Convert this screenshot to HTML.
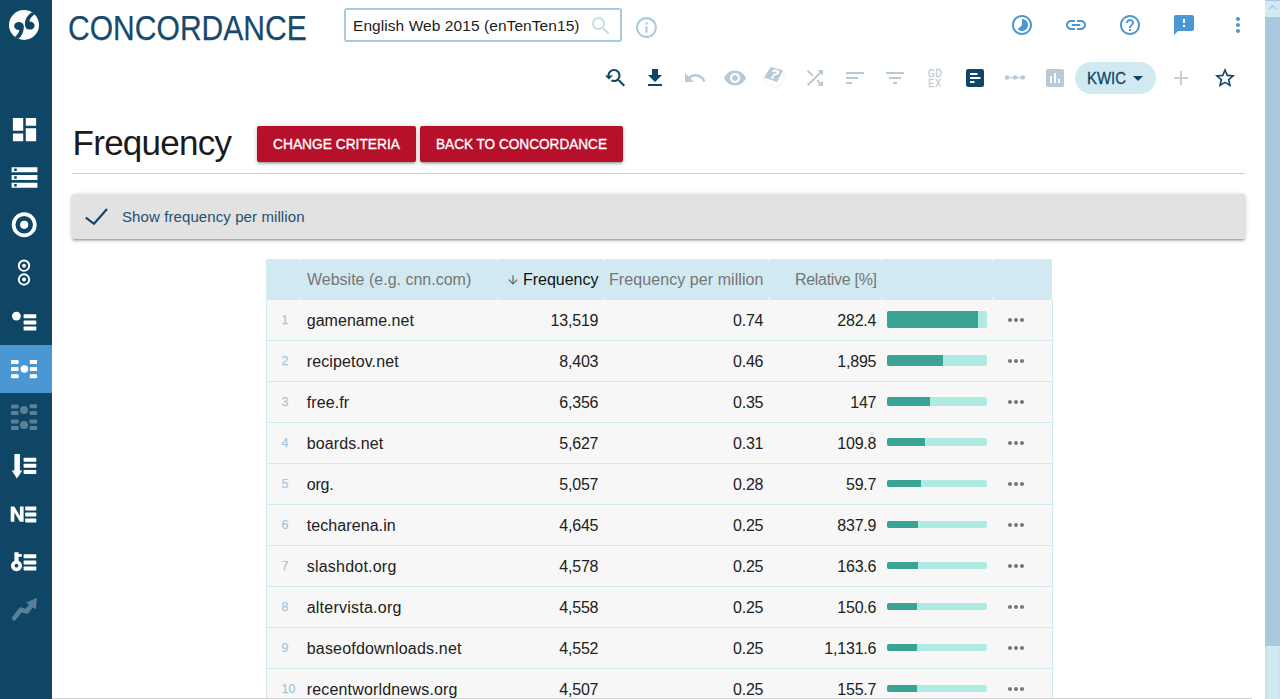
<!DOCTYPE html>
<html lang="en">
<head>
<meta charset="utf-8">
<title>Concordance - Frequency</title>
<style>
html,body{margin:0;padding:0;width:1280px;height:699px;overflow:hidden;background:#fff}
body{position:relative;font-family:"Liberation Sans",sans-serif}
.t{position:absolute;white-space:nowrap;transform-origin:0 50%}
.i{position:absolute;display:block}
.side{position:absolute;left:0;top:0;width:52px;height:699px;background:#0f4666}
.active{position:absolute;left:0;top:345px;width:52px;height:48px;background:#4a97d3}
.inp{position:absolute;left:344px;top:8px;width:274px;height:30px;border:2px solid #a6cbdf;border-radius:3px;background:#fff}
.gdex{position:absolute;left:921px;top:69px;width:28px;text-align:center;font-size:10px;line-height:10.4px;color:#b9cbd7;letter-spacing:.9px;text-indent:.9px;-webkit-text-stroke:.3px #b9cbd7;transform:scaleX(.88)}
.kwic{position:absolute;left:1075px;top:62px;width:81px;height:32px;border-radius:16px;background:#d1eaf2}
.btn{position:absolute;top:126px;height:36px;background:#b7102a;border-radius:2px;box-shadow:0 2px 2px 0 rgba(0,0,0,.14),0 3px 1px -2px rgba(0,0,0,.12),0 1px 5px 0 rgba(0,0,0,.2)}
.hr{position:absolute;left:72px;top:173px;width:1173px;height:1px;background:#cfcfcf}
.panel{position:absolute;left:72px;top:194px;width:1173px;height:45px;background:#e2e2e2;border-radius:2px;box-shadow:0 2px 2px 0 rgba(0,0,0,.14),0 3px 1px -2px rgba(0,0,0,.12),0 1px 5px 0 rgba(0,0,0,.2)}
.thead{position:absolute;left:266px;top:259px;width:786px;height:40px;background:#fff}
.th{position:absolute;top:259px;height:40px;background:#d1eaf2;border-radius:2px}
.tbody{position:absolute;left:266px;top:299px;width:785px;height:400px;background:#f7f7f7;border:1px solid #d1eaf2;border-bottom:0}
.rl{position:absolute;left:267px;width:785px;height:1px;background:#d1eaf2}
.n{font-size:12.5px;line-height:18px;color:#a3c7dc;-webkit-text-stroke:.25px #a3c7dc;margin-left:-.5px}
.c{font-size:16px;line-height:20px;color:#212121}
.r{text-align:right;letter-spacing:-.2px}
.bar{position:absolute;left:887px;width:100px;background:#b0ebe3;border-radius:2px;overflow:hidden}
.bar div{height:100%;background:#3aa394}
.sb{position:absolute;left:1265px;top:0;width:15px;height:699px;background:linear-gradient(to right,#c6e1ed,#d2eaf2 4px,#d2eaf2 11px,#cae4ee)}
.sbt{position:absolute;left:1265px;top:17px;width:15px;height:629px;background:#a6c9de}
.sbu{position:absolute;left:1265px;top:0;width:15px;height:16px;background:#d1eaf2;border-top:1px solid #a6c9de}
.bot{position:absolute;left:52px;top:698px;width:1200px;height:1px;background:#cfcfcf}

</style>
</head>
<body>
<div class="side"></div>
<div class="active"></div>
<svg class="i" style="left:8px;top:9px;" width="32" height="32" viewBox="0 0 32 32"><circle cx="16" cy="16" r="15" fill="#fff"/><g fill="#0f4666"><g><ellipse cx="10.900" cy="17" rx="4.800" ry="4"/><path d="M15.600 16.600C16.300 22.600 13.900 27.100 10.300 30L6.900 28.100C9.500 25.900 11.100 23.400 11.500 20.300z"/></g><ellipse cx="21.800" cy="16.600" rx="4.800" ry="4"/><path d="M17 16.800C16.300 11 19.300 6.300 24 3.300L26.700 5.200C23.600 7.300 21.700 10 21.300 13z"/></g></svg>
<svg class="i" style="left:8.5px;top:113.5px;" width="31" height="31" viewBox="0 0 24 24"><path fill="#fff" d="M3 13h8V3H3v10zm0 8h8v-6H3v6zm10 0h8V11h-8v10zm0-18v6h8V3h-8z"/></svg>
<svg class="i" style="left:8.5px;top:161.5px;" width="31" height="31" viewBox="0 0 24 24"><path fill="#fff" d="M2 20h20v-4H2v4zm2-3h2v2H4v-2zM2 4v4h20V4H2zm4 3H4V5h2v2zm-4 7h20v-4H2v4zm2-3h2v2H4v-2z"/></svg>
<svg class="i" style="left:0;top:0" width="52" height="699" viewBox="0 0 52 699"><circle cx="24.200" cy="224.800" r="10.600" fill="none" stroke="#fff" stroke-width="3.700"/><circle cx="24.200" cy="224.800" r="4.100" fill="#fff"/><g fill="none" stroke="#fff" stroke-width="1.900"><circle cx="24" cy="265.700" r="5.200"/><circle cx="24" cy="279.500" r="5.200"/></g><circle cx="24" cy="265.700" r="2" fill="#fff"/><circle cx="24" cy="279.500" r="2" fill="#fff"/><g fill="#fff"><circle cx="16.400" cy="316.100" r="4.400"/><rect x="23.6" y="314.2" width="12.7" height="4.0" rx=".7"/><rect x="23.6" y="320.4" width="12.7" height="4.0" rx=".7"/><rect x="23.6" y="326.6" width="12.7" height="4.0" rx=".7"/></g><g fill="#fff"><rect x="11" y="360" width="7.6" height="4.0" rx=".7"/><rect x="11" y="367.1" width="7.6" height="4.0" rx=".7"/><rect x="11" y="374.2" width="7.6" height="4.0" rx=".7"/><rect x="29.8" y="360" width="7.3" height="4.0" rx=".7"/><rect x="29.8" y="367.1" width="7.3" height="4.0" rx=".7"/><rect x="29.8" y="374.2" width="7.3" height="4.0" rx=".7"/><circle cx="24.400" cy="369" r="3.800"/></g><g fill="#5a8098"><rect x="11" y="404.6" width="7.6" height="4.0" rx=".7"/><rect x="11" y="411" width="7.6" height="4.0" rx=".7"/><rect x="11" y="419.6" width="7.6" height="4.0" rx=".7"/><rect x="11" y="426" width="7.6" height="4.0" rx=".7"/><rect x="29.6" y="404.3" width="7.5" height="4.0" rx=".7"/><rect x="29.6" y="411" width="7.5" height="4.0" rx=".7"/><rect x="29.6" y="419.6" width="7.5" height="4.0" rx=".7"/><rect x="29.6" y="426" width="7.5" height="4.0" rx=".7"/><circle cx="24" cy="409.900" r="4"/><circle cx="24" cy="425" r="4"/></g><g fill="#fff"><path d="M14.400 454.100h5.500v16.300h2.400l-5.400 8.200-5.200-8.200h2.700z"/><rect x="23.6" y="457.7" width="12.7" height="4.0" rx=".7"/><rect x="23.6" y="463.8" width="12.7" height="4.0" rx=".7"/><rect x="23.6" y="469.9" width="12.7" height="4.0" rx=".7"/></g><g fill="#fff"><path d="M10.700 506.600h3.700l5.500 9.300v-9.300h3.700v15.100h-3.700l-5.500-9.300v9.300h-3.700z"/><rect x="25.2" y="506.5" width="11.1" height="4.0" rx=".7"/><rect x="25.2" y="512.5" width="11.1" height="4.0" rx=".7"/><rect x="25.2" y="518.5" width="11.1" height="4.0" rx=".7"/></g><g fill="#fff"><path fill-rule="evenodd" d="M14.400 552.300h4.200v1.700h3.100v2.700h-3.100v4a5.500 5.500 0 1 1-4.200 0zM16.500 563.800a1.900 1.900 0 1 0 0 3.800 1.900 1.900 0 0 0 0-3.800z"/><rect x="23.6" y="554.3" width="12.7" height="4.0" rx=".7"/><rect x="23.6" y="560.4" width="12.7" height="4.0" rx=".7"/><rect x="23.6" y="566.5" width="12.7" height="4.0" rx=".7"/></g><path fill="none" stroke="#5a8098" stroke-width="4.600" stroke-linecap="round" stroke-linejoin="round" d="M14.200 618.100l6.700-8.500 5.700 1.900 4.600-6"/><path fill="#5a8098" d="M36.900 598l-10.900 4.500 10 6.900z"/></svg>
<span class="t" style="left:68.4px;top:6px;font-size:35px;line-height:44px;color:#174a6b;transform:scaleX(0.8588);-webkit-text-stroke:.25px #174a6b;">CONCORDANCE</span>
<div class="inp"></div>
<span class="t" style="left:353px;top:16px;font-size:15.5px;line-height:19px;color:#1c1c1c;letter-spacing:0.067px;">English Web 2015 (enTenTen15)</span>
<svg class="i" style="left:588.7px;top:13.7px;" width="24" height="24" viewBox="0 0 24 24"><path fill="#c9dde9" d="M15.5 14h-.79l-.28-.27C15.41 12.59 16 11.11 16 9.5 16 5.91 13.09 3 9.5 3S3 5.91 3 9.5 5.91 16 9.5 16c1.61 0 3.09-.59 4.23-1.57l.27.28v.79l5 4.99L20.49 19l-4.99-5zm-6 0C7.01 14 5 11.99 5 9.5S7.01 5 9.5 5 14 7.01 14 9.5 11.99 14 9.5 14z"/></svg>
<svg class="i" style="left:633.5px;top:14.5px;" width="25" height="25" viewBox="0 0 24 24"><path fill="#a9cbdf" d="M11 17h2v-6h-2v6zm1-15C6.48 2 2 6.48 2 12s4.48 10 10 10 10-4.48 10-10S17.52 2 12 2zm0 18c-4.41 0-8-3.59-8-8s3.59-8 8-8 8 3.59 8 8-3.59 8-8 8zM11 9h2V7h-2v2z"/></svg>
<svg class="i" style="left:1010px;top:13px;" width="24" height="24" viewBox="0 0 24 24"><path fill="#4a97d3" d="M16.24 7.76C15.07 6.59 13.54 6 12 6v6l-4.24 4.24c2.34 2.34 6.14 2.34 8.49 0 2.34-2.34 2.34-6.14-.01-8.48zM12 2C6.48 2 2 6.48 2 12s4.48 10 10 10 10-4.48 10-10S17.52 2 12 2zm0 18c-4.42 0-8-3.58-8-8s3.58-8 8-8 8 3.58 8 8-3.58 8-8 8z"/></svg>
<svg class="i" style="left:1064px;top:13px;" width="24" height="24" viewBox="0 0 24 24"><path fill="#4a97d3" d="M3.9 12c0-1.71 1.39-3.1 3.1-3.1h4V7H7c-2.76 0-5 2.24-5 5s2.24 5 5 5h4v-1.9H7c-1.71 0-3.1-1.39-3.1-3.1zM8 13h8v-2H8v2zm9-6h-4v1.9h4c1.71 0 3.1 1.39 3.1 3.1s-1.39 3.1-3.1 3.1h-4V17h4c2.76 0 5-2.24 5-5s-2.24-5-5-5z"/></svg>
<svg class="i" style="left:1118px;top:13px;" width="24" height="24" viewBox="0 0 24 24"><path fill="#4a97d3" d="M11 18h2v-2h-2v2zm1-16C6.48 2 2 6.48 2 12s4.48 10 10 10 10-4.48 10-10S17.52 2 12 2zm0 18c-4.41 0-8-3.59-8-8s3.59-8 8-8 8 3.59 8 8-3.59 8-8 8zm0-14c-2.21 0-4 1.79-4 4h2c0-1.1.9-2 2-2s2 .9 2 2c0 2-3 1.75-3 5h2c0-2.25 3-2.5 3-5 0-2.21-1.79-4-4-4z"/></svg>
<svg class="i" style="left:1172px;top:13px;" width="24" height="24" viewBox="0 0 24 24"><path fill="#4a97d3" d="M20 2H4c-1.1 0-1.99.9-1.99 2L2 22l4-4h14c1.1 0 2-.9 2-2V4c0-1.1-.9-2-2-2zm-7 12h-2v-2h2v2zm0-4h-2V6h2v4z"/></svg>
<svg class="i" style="left:1226px;top:13px;" width="24" height="24" viewBox="0 0 24 24"><path fill="#4a97d3" d="M12 8c1.1 0 2-.9 2-2s-.9-2-2-2-2 .9-2 2 .9 2 2 2zm0 2c-1.1 0-2 .9-2 2s.9 2 2 2 2-.9 2-2-.9-2-2-2zm0 6c-1.1 0-2 .9-2 2s.9 2 2 2 2-.9 2-2-.9-2-2-2z"/></svg>
<svg class="i" style="left:603px;top:66px;" width="24" height="24" viewBox="0 0 24 24"><path fill="#0f4567" d="M17.01 14h-.8l-.27-.27c.98-1.14 1.57-2.61 1.57-4.23 0-3.59-2.91-6.5-6.5-6.5s-6.5 3-6.5 6.5H2l3.84 4 4.16-4H6.51C6.51 7 8.53 5 11.01 5s4.5 2.01 4.5 4.5c0 2.48-2.02 4.5-4.5 4.5-.65 0-1.26-.14-1.82-.38L7.71 15.1c.97.57 2.09.9 3.3.9 1.61 0 3.08-.59 4.22-1.57l.27.27v.79l5.01 4.99L22 19l-4.99-5z"/></svg>
<svg class="i" style="left:643px;top:66px;" width="24" height="24" viewBox="0 0 24 24"><path fill="#0f4567" d="M19 9h-4V3H9v6H5l7 7 7-7zM5 18v2h14v-2H5z"/></svg>
<svg class="i" style="left:683px;top:66px;" width="24" height="24" viewBox="0 0 24 24"><path fill="#b8cad6" d="M12.5 8c-2.65 0-5.05.99-6.9 2.6L2 7v9h9l-3.62-3.62c1.39-1.16 3.16-1.88 5.12-1.88 3.54 0 6.55 2.31 7.6 5.5l2.37-.78C21.08 11.03 17.15 8 12.5 8z"/></svg>
<svg class="i" style="left:723px;top:66px;" width="24" height="24" viewBox="0 0 24 24"><path fill="#b8cad6" d="M12 4.5C7 4.5 2.73 7.61 1 12c1.73 4.39 6 7.5 11 7.5s9.27-3.11 11-7.5c-1.73-4.39-6-7.5-11-7.5zM12 17c-2.76 0-5-2.24-5-5s2.24-5 5-5 5 2.24 5 5-2.24 5-5 5zm0-8c-1.66 0-3 1.34-3 3s1.34 3 3 3 3-1.34 3-3-1.34-3-3-3z"/></svg>
<svg class="i" style="left:760px;top:62px" width="28" height="30" viewBox="0 0 28 30"><path fill="#b8cad6" d="M10.800 5l12.300 3.200-6 11.900L3.900 15.400z"/><path fill="none" stroke="#e9eff3" stroke-width=".9" d="M3.900 15.400l1.200 5 13.200 6.300-1.200-6.600M18.300 26.700l6-11.300-1.200-7.200"/><text x="0" y="4.700" font-family="Liberation Sans, sans-serif" font-weight="700" font-size="13.500" fill="#fff" stroke="#fff" stroke-width=".4" text-anchor="middle" transform="translate(14.300 12.200) rotate(17) skewX(-10)">?</text></svg>
<svg class="i" style="left:803px;top:66px;" width="24" height="24" viewBox="0 0 24 24"><path fill="#b8cad6" d="M10.59 9.17L5.41 4 4 5.41l5.17 5.17 1.42-1.41zM14.5 4l2.04 2.04L4 18.59 5.41 20 17.96 7.46 20 9.5V4h-5.5zm.33 9.41l-1.41 1.41 3.13 3.13L14.5 20H20v-5.5l-2.04 2.04-3.13-3.13z"/></svg>
<svg class="i" style="left:843px;top:66px;" width="24" height="24" viewBox="0 0 24 24"><path fill="#b8cad6" d="M3 18h6v-2H3v2zM3 6v2h18V6H3zm0 7h12v-2H3v2z"/></svg>
<svg class="i" style="left:883px;top:66px;" width="24" height="24" viewBox="0 0 24 24"><path fill="#b8cad6" d="M10 18h4v-2h-4v2zM3 6v2h18V6H3zm3 7h12v-2H6v2z"/></svg>
<div class="gdex">GD<br>EX</div>
<svg class="i" style="left:963px;top:66px;" width="24" height="24" viewBox="0 0 24 24"><rect x="3" y="3" width="18" height="18" rx="2.2" fill="#0f4567"/><g fill="#fff"><rect x="7" y="7" width="7.500" height="2"/><rect x="7" y="11" width="10.500" height="2"/><rect x="7" y="15" width="4.500" height="2"/></g></svg>
<svg class="i" style="left:1003px;top:66px;" width="24" height="24" viewBox="0 0 24 24"><g fill="#b8cad6"><rect x="4" y="11" width="16" height="1"/><circle cx="4" cy="11.500" r="2.300"/><circle cx="12" cy="11.500" r="2.300"/><circle cx="19.800" cy="11.500" r="2.300"/></g></svg>
<svg class="i" style="left:1043px;top:66px;" width="24" height="24" viewBox="0 0 24 24"><path fill="#b8cad6" d="M19 3H5c-1.1 0-2 .9-2 2v14c0 1.1.9 2 2 2h14c1.1 0 2-.9 2-2V5c0-1.1-.9-2-2-2zM9 17H7v-7h2v7zm4 0h-2V7h2v10zm4 0h-2v-4h2v4z"/></svg>
<div class="kwic"></div>
<span class="t" style="left:1087px;top:69px;font-size:16px;line-height:20px;color:#0f4567;transform:scaleX(0.9334);-webkit-text-stroke:.3px #0f4567;">KWIC</span>
<svg class="i" style="left:1126px;top:65.5px;" width="24" height="24" viewBox="0 0 24 24"><path fill="#0f4567" d="M7 10l5 5 5-5z"/></svg>
<svg class="i" style="left:1169px;top:66px;" width="24" height="24" viewBox="0 0 24 24"><path fill="#c3d1db" d="M19 13h-6v6h-2v-6H5v-2h6V5h2v6h6v2z"/></svg>
<svg class="i" style="left:1213px;top:66px;" width="24" height="24" viewBox="0 0 24 24"><path fill="#0f4567" d="M22 9.24l-7.19-.62L12 2 9.19 8.63 2 9.24l5.46 4.73L5.82 21 12 17.27 18.18 21l-1.63-7.03L22 9.24zM12 15.4l-3.76 2.27 1-4.28-3.32-2.88 4.38-.38L12 6.1l1.71 4.04 4.38.38-3.32 2.88 1 4.28L12 15.4z"/></svg>
<span class="t" style="left:72.6px;top:121px;font-size:35px;line-height:44px;color:#1b1b1b;letter-spacing:-0.747px;">Frequency</span>
<div class="btn" style="left:257px;width:159px"></div>
<div class="btn" style="left:420px;width:203px"></div>
<span class="t" style="left:272.5px;top:135px;font-size:14.5px;line-height:18px;color:#fff;transform:scaleX(0.9495);-webkit-text-stroke:.35px #fff;">CHANGE CRITERIA</span>
<span class="t" style="left:436px;top:135px;font-size:14.5px;line-height:18px;color:#fff;transform:scaleX(0.9377);-webkit-text-stroke:.35px #fff;">BACK TO CONCORDANCE</span>
<div class="hr"></div>
<div class="panel"></div>
<svg class="i" style="left:84.3px;top:205px;" width="24" height="24" viewBox="0 0 24 24"><path fill="none" stroke="#0f4567" stroke-width="2.100" d="M1.800 12.600l8.200 6.200L23 4"/></svg>
<span class="t" style="left:122px;top:207px;font-size:15px;line-height:19px;color:#1f506e;letter-spacing:0.096px;">Show frequency per million</span>
<div class="thead"></div>
<div class="th" style="left:266px;width:35px"></div>
<div class="th" style="left:301px;width:197px"></div>
<div class="th" style="left:498px;width:106px"></div>
<div class="th" style="left:604px;width:165px"></div>
<div class="th" style="left:769px;width:113px"></div>
<div class="th" style="left:882px;width:111px"></div>
<div class="th" style="left:993px;width:59px"></div>
<span class="t" style="left:307px;top:270px;font-size:16px;line-height:20px;color:#757575;">Website (e.g. cnn.com)</span>
<svg class="i" style="left:505.5px;top:272.5px;" width="14" height="14" viewBox="0 0 24 24"><path fill="#616161" d="M20 12l-1.41-1.41L13 16.17V4h-2v12.17l-5.58-5.59L4 12l8 8 8-8z"/></svg>
<span class="t" style="left:523px;top:270px;font-size:16px;line-height:20px;color:#111;letter-spacing:-0.012px;">Frequency</span>
<span class="t" style="left:609px;top:270px;font-size:16px;line-height:20px;color:#757575;letter-spacing:0.077px;">Frequency per million</span>
<span class="t" style="left:795px;top:270px;font-size:16px;line-height:20px;color:#757575;letter-spacing:-0.307px;">Relative [%]</span>
<div class="tbody"></div>
<span class="t n" style="left:282px;top:311px">1</span>
<span class="t" style="left:306.7px;top:311px;font-size:16px;line-height:20px;color:#212121;letter-spacing:0.042px;">gamename.net</span>
<span class="t c r" style="left:498px;width:100.3px;top:311px">13,519</span>
<span class="t c r" style="left:604px;width:159.3px;top:311px">0.74</span>
<span class="t c r" style="left:769px;width:107.3px;top:311px">282.4</span>
<div class="bar" style="top:311px;height:17px"><div style="width:91px"></div></div>
<svg class="i" style="left:1004.2px;top:307.5px;" width="24" height="24" viewBox="0 0 24 24"><path fill="#757575" d="M6 10c-1.1 0-2 .9-2 2s.9 2 2 2 2-.9 2-2-.9-2-2-2zm12 0c-1.1 0-2 .9-2 2s.9 2 2 2 2-.9 2-2-.9-2-2-2zm-6 0c-1.1 0-2 .9-2 2s.9 2 2 2 2-.9 2-2-.9-2-2-2z"/></svg>
<div class="rl" style="top:340px"></div>
<span class="t n" style="left:282px;top:352px">2</span>
<span class="t" style="left:306.7px;top:352px;font-size:16px;line-height:20px;color:#212121;letter-spacing:0.132px;">recipetov.net</span>
<span class="t c r" style="left:498px;width:100.3px;top:352px">8,403</span>
<span class="t c r" style="left:604px;width:159.3px;top:352px">0.46</span>
<span class="t c r" style="left:769px;width:107.3px;top:352px">1,895</span>
<div class="bar" style="top:355px;height:11px"><div style="width:56px"></div></div>
<svg class="i" style="left:1004.2px;top:348.5px;" width="24" height="24" viewBox="0 0 24 24"><path fill="#757575" d="M6 10c-1.1 0-2 .9-2 2s.9 2 2 2 2-.9 2-2-.9-2-2-2zm12 0c-1.1 0-2 .9-2 2s.9 2 2 2 2-.9 2-2-.9-2-2-2zm-6 0c-1.1 0-2 .9-2 2s.9 2 2 2 2-.9 2-2-.9-2-2-2z"/></svg>
<div class="rl" style="top:381px"></div>
<span class="t n" style="left:282px;top:393px">3</span>
<span class="t" style="left:306.7px;top:393px;font-size:16px;line-height:20px;color:#212121;letter-spacing:0.117px;">free.fr</span>
<span class="t c r" style="left:498px;width:100.3px;top:393px">6,356</span>
<span class="t c r" style="left:604px;width:159.3px;top:393px">0.35</span>
<span class="t c r" style="left:769px;width:107.3px;top:393px">147</span>
<div class="bar" style="top:397px;height:9px"><div style="width:43px"></div></div>
<svg class="i" style="left:1004.2px;top:389.5px;" width="24" height="24" viewBox="0 0 24 24"><path fill="#757575" d="M6 10c-1.1 0-2 .9-2 2s.9 2 2 2 2-.9 2-2-.9-2-2-2zm12 0c-1.1 0-2 .9-2 2s.9 2 2 2 2-.9 2-2-.9-2-2-2zm-6 0c-1.1 0-2 .9-2 2s.9 2 2 2 2-.9 2-2-.9-2-2-2z"/></svg>
<div class="rl" style="top:422px"></div>
<span class="t n" style="left:282px;top:434px">4</span>
<span class="t" style="left:306.7px;top:434px;font-size:16px;line-height:20px;color:#212121;letter-spacing:0.110px;">boards.net</span>
<span class="t c r" style="left:498px;width:100.3px;top:434px">5,627</span>
<span class="t c r" style="left:604px;width:159.3px;top:434px">0.31</span>
<span class="t c r" style="left:769px;width:107.3px;top:434px">109.8</span>
<div class="bar" style="top:437.5px;height:8px"><div style="width:38px"></div></div>
<svg class="i" style="left:1004.2px;top:430.5px;" width="24" height="24" viewBox="0 0 24 24"><path fill="#757575" d="M6 10c-1.1 0-2 .9-2 2s.9 2 2 2 2-.9 2-2-.9-2-2-2zm12 0c-1.1 0-2 .9-2 2s.9 2 2 2 2-.9 2-2-.9-2-2-2zm-6 0c-1.1 0-2 .9-2 2s.9 2 2 2 2-.9 2-2-.9-2-2-2z"/></svg>
<div class="rl" style="top:463px"></div>
<span class="t n" style="left:282px;top:475px">5</span>
<span class="t" style="left:306.7px;top:475px;font-size:16px;line-height:20px;color:#212121;letter-spacing:-0.159px;">org.</span>
<span class="t c r" style="left:498px;width:100.3px;top:475px">5,057</span>
<span class="t c r" style="left:604px;width:159.3px;top:475px">0.28</span>
<span class="t c r" style="left:769px;width:107.3px;top:475px">59.7</span>
<div class="bar" style="top:480px;height:7px"><div style="width:34px"></div></div>
<svg class="i" style="left:1004.2px;top:471.5px;" width="24" height="24" viewBox="0 0 24 24"><path fill="#757575" d="M6 10c-1.1 0-2 .9-2 2s.9 2 2 2 2-.9 2-2-.9-2-2-2zm12 0c-1.1 0-2 .9-2 2s.9 2 2 2 2-.9 2-2-.9-2-2-2zm-6 0c-1.1 0-2 .9-2 2s.9 2 2 2 2-.9 2-2-.9-2-2-2z"/></svg>
<div class="rl" style="top:504px"></div>
<span class="t n" style="left:282px;top:516px">6</span>
<span class="t" style="left:306.7px;top:516px;font-size:16px;line-height:20px;color:#212121;letter-spacing:0.085px;">techarena.in</span>
<span class="t c r" style="left:498px;width:100.3px;top:516px">4,645</span>
<span class="t c r" style="left:604px;width:159.3px;top:516px">0.25</span>
<span class="t c r" style="left:769px;width:107.3px;top:516px">837.9</span>
<div class="bar" style="top:521px;height:7px"><div style="width:31px"></div></div>
<svg class="i" style="left:1004.2px;top:512.5px;" width="24" height="24" viewBox="0 0 24 24"><path fill="#757575" d="M6 10c-1.1 0-2 .9-2 2s.9 2 2 2 2-.9 2-2-.9-2-2-2zm12 0c-1.1 0-2 .9-2 2s.9 2 2 2 2-.9 2-2-.9-2-2-2zm-6 0c-1.1 0-2 .9-2 2s.9 2 2 2 2-.9 2-2-.9-2-2-2z"/></svg>
<div class="rl" style="top:545px"></div>
<span class="t n" style="left:282px;top:557px">7</span>
<span class="t" style="left:306.7px;top:557px;font-size:16px;line-height:20px;color:#212121;letter-spacing:0.221px;">slashdot.org</span>
<span class="t c r" style="left:498px;width:100.3px;top:557px">4,578</span>
<span class="t c r" style="left:604px;width:159.3px;top:557px">0.25</span>
<span class="t c r" style="left:769px;width:107.3px;top:557px">163.6</span>
<div class="bar" style="top:562px;height:7px"><div style="width:31px"></div></div>
<svg class="i" style="left:1004.2px;top:553.5px;" width="24" height="24" viewBox="0 0 24 24"><path fill="#757575" d="M6 10c-1.1 0-2 .9-2 2s.9 2 2 2 2-.9 2-2-.9-2-2-2zm12 0c-1.1 0-2 .9-2 2s.9 2 2 2 2-.9 2-2-.9-2-2-2zm-6 0c-1.1 0-2 .9-2 2s.9 2 2 2 2-.9 2-2-.9-2-2-2z"/></svg>
<div class="rl" style="top:586px"></div>
<span class="t n" style="left:282px;top:598px">8</span>
<span class="t" style="left:306.7px;top:598px;font-size:16px;line-height:20px;color:#212121;letter-spacing:0.239px;">altervista.org</span>
<span class="t c r" style="left:498px;width:100.3px;top:598px">4,558</span>
<span class="t c r" style="left:604px;width:159.3px;top:598px">0.25</span>
<span class="t c r" style="left:769px;width:107.3px;top:598px">150.6</span>
<div class="bar" style="top:603px;height:7px"><div style="width:30px"></div></div>
<svg class="i" style="left:1004.2px;top:594.5px;" width="24" height="24" viewBox="0 0 24 24"><path fill="#757575" d="M6 10c-1.1 0-2 .9-2 2s.9 2 2 2 2-.9 2-2-.9-2-2-2zm12 0c-1.1 0-2 .9-2 2s.9 2 2 2 2-.9 2-2-.9-2-2-2zm-6 0c-1.1 0-2 .9-2 2s.9 2 2 2 2-.9 2-2-.9-2-2-2z"/></svg>
<div class="rl" style="top:627px"></div>
<span class="t n" style="left:282px;top:639px">9</span>
<span class="t" style="left:306.7px;top:639px;font-size:16px;line-height:20px;color:#212121;letter-spacing:0.198px;">baseofdownloads.net</span>
<span class="t c r" style="left:498px;width:100.3px;top:639px">4,552</span>
<span class="t c r" style="left:604px;width:159.3px;top:639px">0.25</span>
<span class="t c r" style="left:769px;width:107.3px;top:639px">1,131.6</span>
<div class="bar" style="top:644px;height:7px"><div style="width:30px"></div></div>
<svg class="i" style="left:1004.2px;top:635.5px;" width="24" height="24" viewBox="0 0 24 24"><path fill="#757575" d="M6 10c-1.1 0-2 .9-2 2s.9 2 2 2 2-.9 2-2-.9-2-2-2zm12 0c-1.1 0-2 .9-2 2s.9 2 2 2 2-.9 2-2-.9-2-2-2zm-6 0c-1.1 0-2 .9-2 2s.9 2 2 2 2-.9 2-2-.9-2-2-2z"/></svg>
<div class="rl" style="top:668px"></div>
<span class="t n" style="left:282px;top:680px">10</span>
<span class="t" style="left:306.7px;top:680px;font-size:16px;line-height:20px;color:#212121;letter-spacing:0.176px;">recentworldnews.org</span>
<span class="t c r" style="left:498px;width:100.3px;top:680px">4,507</span>
<span class="t c r" style="left:604px;width:159.3px;top:680px">0.25</span>
<span class="t c r" style="left:769px;width:107.3px;top:680px">155.7</span>
<div class="bar" style="top:685px;height:7px"><div style="width:30px"></div></div>
<svg class="i" style="left:1004.2px;top:676.5px;" width="24" height="24" viewBox="0 0 24 24"><path fill="#757575" d="M6 10c-1.1 0-2 .9-2 2s.9 2 2 2 2-.9 2-2-.9-2-2-2zm12 0c-1.1 0-2 .9-2 2s.9 2 2 2 2-.9 2-2-.9-2-2-2zm-6 0c-1.1 0-2 .9-2 2s.9 2 2 2 2-.9 2-2-.9-2-2-2z"/></svg>
<div class="sb"></div><div class="sbt"></div><div class="sbu"></div>
<svg class="i" style="left:1265px;top:0" width="15" height="17" viewBox="0 0 15 17"><path fill="none" stroke="#a3c7dc" stroke-width="1.200" d="M4.100 9.300L7.600 5.700l3.500 3.600"/></svg>
<div class="bot"></div>
</body>
</html>
